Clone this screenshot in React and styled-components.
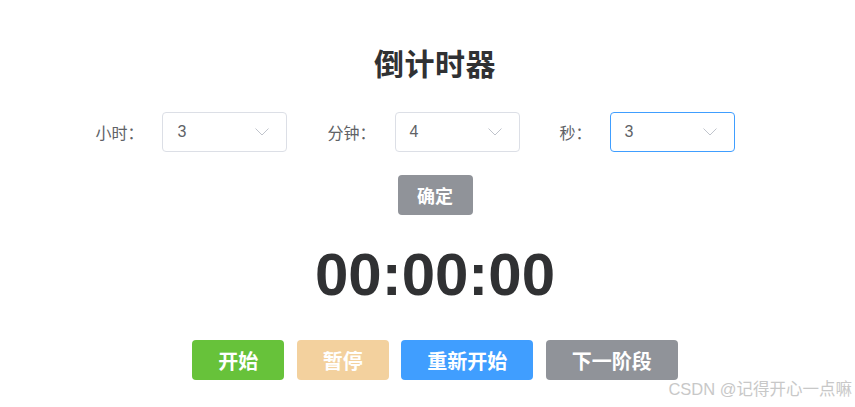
import React from 'react';
import styled, { createGlobalStyle } from 'styled-components';

const GlobalStyle = createGlobalStyle`
  html, body {
    margin: 0;
    padding: 0;
    background: #fff;
  }
  body {
    font-family: "Liberation Sans", "Noto Sans CJK SC", sans-serif;
  }
`;

const colors = {
  success: '#67c23a',
  warningDisabled: '#f3d19e',
  primary: '#409eff',
  info: '#909399',
};

const Page = styled.div`
  position: relative;
  width: 855px;
  height: 407px;
  box-sizing: border-box;
  padding: 45px 0 0 15px;
  display: flex;
  flex-direction: column;
  align-items: center;
`;

const Title = styled.h2`
  margin: 0;
  font-size: 30px;
  line-height: 40px;
  font-weight: 700;
  color: #303133;
  letter-spacing: 0.5px;
`;

const PickerRow = styled.div`
  display: flex;
  align-items: center;
  margin-top: 27px;
`;

const PickerItem = styled.div`
  display: flex;
  align-items: center;
  margin-right: 40px;
`;

const PickerLabel = styled.span`
  font-size: 16px;
  color: #606266;
  margin-right: ${(p) => p.$gap}px;
  white-space: nowrap;
`;

const SelectBox = styled.div`
  width: 125px;
  height: 40px;
  box-sizing: border-box;
  border: 1px solid ${(p) => (p.$focused ? colors.primary : '#dcdfe6')};
  border-radius: 4px;
  display: flex;
  align-items: center;
  justify-content: space-between;
  padding: 0 17px 0 14px;
  font-size: 16px;
  color: #606266;
`;

const ConfirmButton = styled.button`
  margin-top: 23px;
  width: 75px;
  height: 40px;
  padding: 0;
  border: none;
  border-radius: 4px;
  background: ${colors.info};
  color: #fff;
  font-family: inherit;
  font-size: 18px;
  font-weight: 700;
  cursor: pointer;
`;

const Clock = styled.div`
  margin-top: 20px;
  font-size: 60px;
  line-height: 80px;
  font-weight: 700;
  color: #303133;
`;

const ActionRow = styled.div`
  display: flex;
  gap: 12.5px;
  margin-top: 25px;
`;

const ActionButton = styled.button`
  width: ${(p) => p.$width}px;
  height: 40px;
  padding: 0;
  border: none;
  border-radius: 4px;
  background: ${(p) => p.$color};
  color: #fff;
  font-family: inherit;
  font-size: 20px;
  font-weight: 700;
  cursor: pointer;
`;

const Watermark = styled.div`
  position: absolute;
  right: 3px;
  bottom: 7px;
  font-size: 16.5px;
  color: #c8c8c8;
  white-space: nowrap;
`;

const Chevron = () => (
  <svg width="14" height="8" viewBox="0 0 14 8">
    <polyline points="0.5,0.5 7,7 13.5,0.5" fill="none" stroke="#c0c4cc" strokeWidth="1" />
  </svg>
);

const pickers = [
  { label: '小时：', value: 3, gap: 19 },
  { label: '分钟：', value: 4, gap: 19 },
  { label: '秒：', value: 3, gap: 18, focused: true },
];

const actions = [
  { text: '开始', width: 92, color: colors.success },
  { text: '暂停', width: 92, color: colors.warningDisabled },
  { text: '重新开始', width: 132, color: colors.primary },
  { text: '下一阶段', width: 132, color: colors.info },
];

export default function App() {
  return (
    <>
      <GlobalStyle />
      <Page>
        <Title>倒计时器</Title>
        <PickerRow>
          {pickers.map((p) => (
            <PickerItem key={p.label}>
              <PickerLabel $gap={p.gap}>{p.label}</PickerLabel>
              <SelectBox $focused={p.focused}>
                <span>{p.value}</span>
                <Chevron />
              </SelectBox>
            </PickerItem>
          ))}
        </PickerRow>
        <ConfirmButton>确定</ConfirmButton>
        <Clock>00:00:00</Clock>
        <ActionRow>
          {actions.map((a) => (
            <ActionButton key={a.text} $width={a.width} $color={a.color}>
              {a.text}
            </ActionButton>
          ))}
        </ActionRow>
        <Watermark>CSDN @记得开心一点嘛</Watermark>
      </Page>
    </>
  );
}
